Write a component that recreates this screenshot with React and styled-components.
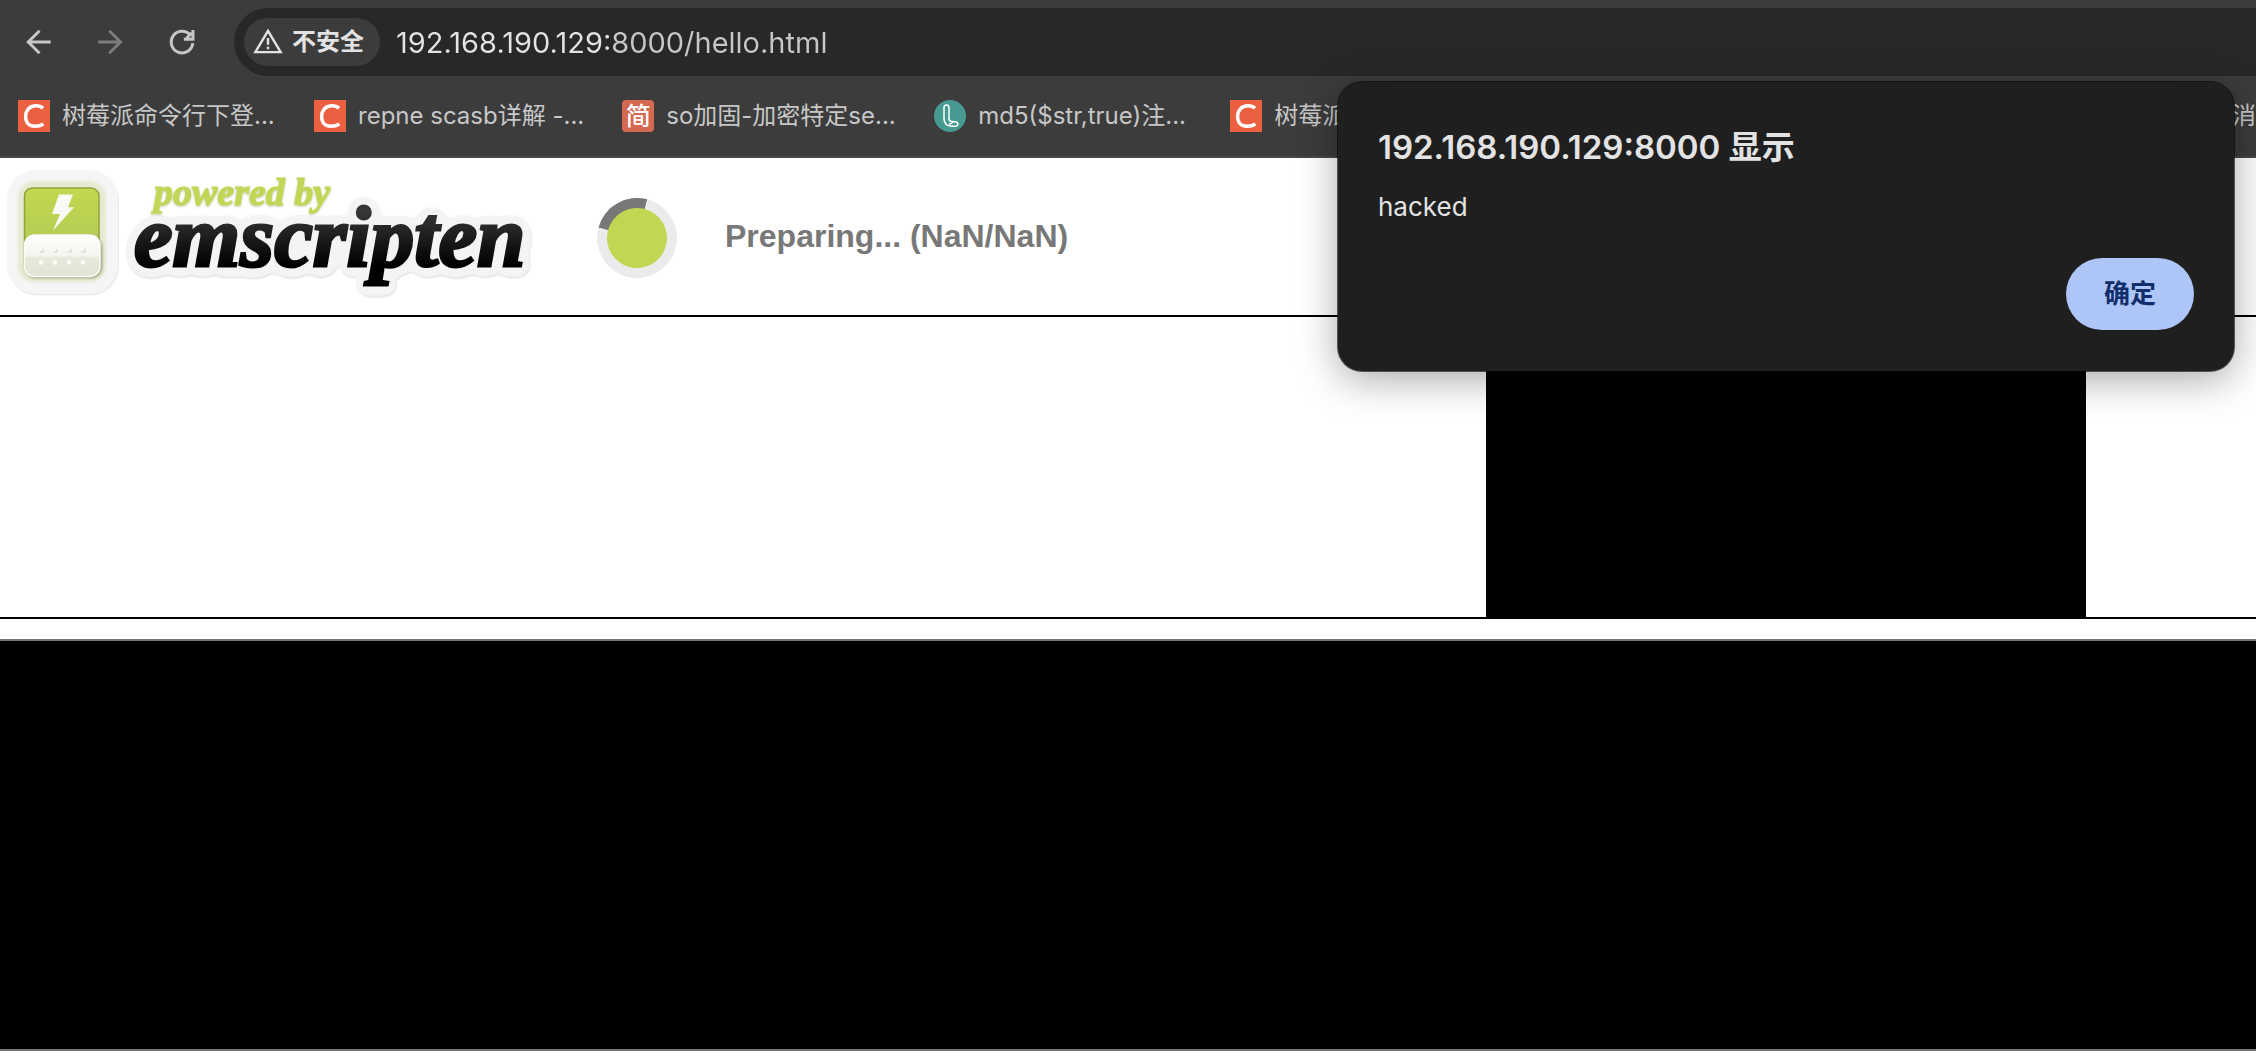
import React from "react";
import styled, { createGlobalStyle } from "styled-components";

const UI_FONT = `Inter, "Noto Sans CJK SC", sans-serif`;

const GlobalStyle = createGlobalStyle`
  *, *::before, *::after { box-sizing: border-box; }
  body { margin: 0; background: #fff; overflow: hidden; }
`;

const Window = styled.div`
  position: relative;
  display: flex;
  flex-direction: column;
  min-height: 100vh;
  overflow: hidden;
  font-family: ${UI_FONT};
`;

const Chrome = styled.header`
  background: #3c3c3c;
  border-bottom: 2px solid #474747;
`;

const Toolbar = styled.div`
  display: flex;
  align-items: center;
  padding: 8px 0 0 8px;
`;

const NavButtons = styled.nav`
  display: flex;
  gap: 12px;
  margin-right: 22px;
`;

const IconButton = styled.button`
  display: grid;
  place-items: center;
  width: 60px;
  height: 60px;
  padding: 0;
  border: 0;
  border-radius: 30px;
  background: none;
  color: ${(p) => (p.disabled ? "#7c7c7c" : "#c7c7c7")};
`;

const AddressBar = styled.div`
  display: flex;
  flex: 1;
  align-items: center;
  gap: 16px;
  height: 68px;
  padding-left: 10px;
  border-radius: 34px 0 0 34px;
  background: #282828;
`;

const SecurityChip = styled.button`
  display: flex;
  align-items: center;
  gap: 8px;
  height: 48px;
  padding: 0 16px 0 8px;
  border: 0;
  border-radius: 24px;
  background: #3c3c3c;
  color: #e3e3e3;
  font: 700 24px/32px ${UI_FONT};
  white-space: nowrap;
`;

const AddressInput = styled.input`
  flex: 1;
  min-width: 0;
  height: 48px;
  padding: 0;
  border: 0;
  outline: 0;
  background: linear-gradient(to right, #e3e3e3 216px, #c7c7c7 216px);
  background-clip: text;
  -webkit-background-clip: text;
  -webkit-text-fill-color: transparent;
  font: 400 29px/40px ${UI_FONT};
`;

const Bookmarks = styled.nav`
  display: flex;
  gap: 38px;
  height: 80px;
  padding-left: 18px;
  align-items: center;
`;

const Bookmark = styled.a`
  display: flex;
  align-items: center;
  gap: 12px;
  min-width: ${(p) => p.$width || 0}px;
  margin-left: ${(p) => (p.$last ? "auto" : 0)};
  color: #c7c7c7;
  font-size: 24px;
  line-height: 32px;
  text-decoration: none;
  white-space: nowrap;
`;

const Page = styled.main`
  display: flex;
  flex-direction: column;
`;

const Banner = styled.div`
  display: flex;
  align-items: center;
  height: 159px;
  border-bottom: 2px solid #000;
`;

const Spinner = styled.div`
  width: 80px;
  height: 80px;
  margin: 2px 48px 0 57px;
  border: 10px solid #ebebeb;
  border-top-color: #787878;
  border-radius: 50%;
  background: #c3d653;
  transform: rotate(-30deg);
`;

const Status = styled.div`
  padding-bottom: 2px;
  color: #787878;
  font: 700 32px/40px "Liberation Sans", Arial, sans-serif;
`;

const Stage = styled.section`
  display: flex;
  justify-content: flex-end;
  padding-right: 170px;
  border-bottom: 2px solid #000;
`;

const Canvas = styled.canvas`
  display: block;
  width: 600px;
  height: 300px;
  background: #000;
`;

const Output = styled.textarea`
  display: block;
  width: 100%;
  height: 412px;
  margin: 20px 0 0;
  padding: 4px;
  border: solid #767676;
  border-width: 2px 0;
  outline: 0;
  resize: none;
  background: #000;
  color: #fff;
  font: 26px/32px "Liberation Mono", monospace;
`;

const Dialog = styled.section`
  position: absolute;
  top: 82px;
  right: 22px;
  display: flex;
  flex-direction: column;
  width: 896px;
  height: 289px;
  padding: 41px 40px;
  border-radius: 24px;
  background: #1f1f1f;
  box-shadow: 0 0 0 1px rgba(0, 0, 0, 0.6), 0 8px 40px rgba(0, 0, 0, 0.35);
  color: #e3e3e3;
`;

const DialogTitle = styled.h1`
  margin: 0;
  font-size: 33px;
  font-weight: 600;
  line-height: 48px;
`;

const DialogText = styled.p`
  margin: 16px 0 0;
  font-size: 26px;
  line-height: 40px;
`;

const ConfirmButton = styled.button`
  align-self: flex-end;
  width: 128px;
  height: 72px;
  margin-top: auto;
  padding: 0;
  border: 0;
  border-radius: 36px;
  background: #adc6f7;
  color: #122e6c;
  font: 600 26px/32px ${UI_FONT};
`;

const Stroke = ({ size = 36, width = 2, children }) => (
  <svg width={size} height={size} viewBox="0 0 24 24" fill="none" stroke="currentColor" strokeWidth={width} aria-hidden="true">
    {children}
  </svg>
);

const CIcon = () => (
  <svg width="32" height="32" viewBox="0 0 32 32" aria-hidden="true">
    <rect width="32" height="32" fill="#ea6040" />
    <path d="M25 8.2C22.8 6.2 20.6 5.8 18 5.8C11.500 5.800 7.600 10.400 7.600 16.800C7.600 22.700 11.300 26.200 17 26.200C20.300 26.200 22.800 25.800 25.400 24" fill="none" stroke="#fff" strokeWidth="3.400" />
  </svg>
);

const BadgeSquare = styled.span`
  display: grid;
  place-items: center;
  width: 32px;
  height: 32px;
  padding-bottom: 4px;
  border-radius: 4px;
  background: #d56850;
  color: #fff;
  font: 500 25px/28px "Noto Sans CJK SC", sans-serif;
`;

const LIcon = () => (
  <svg width="32" height="32" viewBox="0 0 32 32" aria-hidden="true">
    <circle cx="16" cy="16" r="16" fill="#479a92" />
    <path d="M10 7.500C10 4 15 4 15 7.500V18.500C15 20.500 16 21.500 18 21.500C21 21.500 24 22 24 24C24 26.500 20 26.500 18 26.200C12.500 26 10 23 10 18.500ZM15 23.800C17.500 24.500 18.500 22 19 21.800" fill="none" stroke="#fff" strokeWidth="1.500" />
  </svg>
);

const Logo = () => (
  <svg width="540" height="157" viewBox="0 158 540 157" role="img" aria-label="powered by emscripten">
    <defs>
      <linearGradient id="ink" x1="0" y1="0" x2="0" y2="1">
        <stop offset="0.250" stopColor="#363636" />
        <stop offset="0.800" stopColor="#000" />
      </linearGradient>
      <linearGradient id="lime" x1="0" y1="0" x2="0" y2="1">
        <stop offset="0" stopColor="#c3d850" />
        <stop offset="1" stopColor="#a9c556" />
      </linearGradient>
      <linearGradient id="cap" x1="0" y1="0" x2="0" y2="1">
        <stop offset="0" stopColor="#fff" />
        <stop offset="0.500" stopColor="#f3f5ef" />
        <stop offset="0.550" stopColor="#e6eadb" />
        <stop offset="1" stopColor="#dfe4d5" />
      </linearGradient>
      <filter id="soft" x="-10%" y="-10%" width="120%" height="120%">
        <feGaussianBlur stdDeviation="1.500" />
      </filter>
      <filter id="sticker" x="-10%" y="-20%" width="120%" height="140%" colorInterpolationFilters="sRGB">
        <feGaussianBlur in="SourceAlpha" stdDeviation="6" result="spread" />
        <feComponentTransfer in="spread" result="edge">
          <feFuncR type="linear" slope="0" intercept="0.960" />
          <feFuncG type="linear" slope="0" intercept="0.960" />
          <feFuncB type="linear" slope="0" intercept="0.960" />
          <feFuncA type="linear" slope="30" intercept="-0.900" />
        </feComponentTransfer>
        <feDropShadow in="edge" dx="1" dy="2" stdDeviation="0.500" floodColor="#000" floodOpacity="0.090" result="backing" />
        <feMerge>
          <feMergeNode in="backing" />
          <feMergeNode in="SourceGraphic" />
        </feMerge>
      </filter>
      <filter id="lift" x="-5%" y="-10%" width="110%" height="120%">
        <feDropShadow dx="0" dy="1" stdDeviation="1" floodColor="#7d8a3c" floodOpacity="0.500" />
      </filter>
    </defs>
    <rect x="8" y="171.500" width="111" height="124" rx="29" fill="#ebebeb" />
    <rect x="7" y="170" width="111" height="124" rx="29" fill="#f5f5f5" />
    <rect x="18" y="181" width="88" height="101" rx="16" fill="#e5ead0" filter="url(#soft)" />
    <rect x="24.500" y="188" width="74.500" height="86" rx="8" fill="url(#lime)" stroke="#8da33f" strokeWidth="1.500" />
    <rect x="25" y="236" width="77" height="42" rx="11" fill="#8f9878" filter="url(#soft)" />
    <rect x="24.500" y="235" width="75.500" height="41.500" rx="10" fill="url(#cap)" stroke="#fafbf7" strokeWidth="1.500" />
    <path d="M59 194.500H73L68 207.300H74L53 230.500L60 214H52Z" fill="#fafaf5" />
    {[41, 55, 69, 83].map((x) => (
      <g key={x}>
        <circle cx={x + 0.5} cy="250.500" r="2.500" fill="#dde2d3" />
        <circle cx={x - 0.5} cy="249.500" r="2" fill="#fafbf8" />
        <circle cx={x} cy="262.500" r="2.300" fill="#fcfdfa" />
      </g>
    ))}
    <g fontFamily="'Liberation Serif', 'Times New Roman', serif" fontWeight="700" fontStyle="italic">
      <text x="134" y="266" fontSize="87" fill="url(#ink)" stroke="url(#ink)" strokeWidth="3" filter="url(#sticker)">emscripten</text>
      <text x="154" y="205" fontSize="38" fill="#c0d755" stroke="#c0d755" strokeWidth="1" filter="url(#lift)">powered by</text>
    </g>
  </svg>
);

export default function App() {
  return (
    <Window>
      <GlobalStyle />
      <Chrome>
        <Toolbar>
          <NavButtons>
            <IconButton aria-label="Back">
              <Stroke><path d="M20.500 12H5.500M13 4.500L5.500 12l7.500 7.500" /></Stroke>
            </IconButton>
            <IconButton aria-label="Forward" disabled>
              <Stroke><path d="M4 12h15M11.500 4.500L19 12l-7.500 7.500" /></Stroke>
            </IconButton>
            <IconButton aria-label="Reload">
              <Stroke>
                <path d="M19.200 12.800A7.200 7.200 0 1 1 17.500 7.400" />
                <path d="M19.300 4v6.200H13.200M15 9.500L18.500 6" />
              </Stroke>
            </IconButton>
          </NavButtons>
          <AddressBar>
            <SecurityChip>
              <Stroke size={32} width={1.8}>
                <path d="M12 3.600L21.500 19.600H2.500Z" />
                <path d="M12 9v5M12 15.500v2" />
              </Stroke>
              不安全
            </SecurityChip>
            <AddressInput aria-label="Address" defaultValue="192.168.190.129:8000/hello.html" spellCheck={false} />
          </AddressBar>
        </Toolbar>
        <Bookmarks>
          <Bookmark href="#" $width={258}><CIcon />树莓派命令行下登...</Bookmark>
          <Bookmark href="#" $width={270}><CIcon />repne scasb详解 -...</Bookmark>
          <Bookmark href="#" $width={274}><BadgeSquare>简</BadgeSquare>so加固-加密特定se...</Bookmark>
          <Bookmark href="#" $width={258}><LIcon />md5($str,true)注...</Bookmark>
          <Bookmark href="#"><CIcon />树莓派</Bookmark>
          <Bookmark href="#" $last>消</Bookmark>
        </Bookmarks>
      </Chrome>
      <Page>
        <Banner>
          <Logo />
          <Spinner />
          <Status>Preparing... (NaN/NaN)</Status>
        </Banner>
        <Stage>
          <Canvas />
        </Stage>
        <Output aria-label="Output" readOnly />
      </Page>
      <Dialog role="alertdialog" aria-labelledby="alert-title" aria-describedby="alert-text">
        <DialogTitle id="alert-title">192.168.190.129:8000 显示</DialogTitle>
        <DialogText id="alert-text">hacked</DialogText>
        <ConfirmButton>确定</ConfirmButton>
      </Dialog>
    </Window>
  );
}
